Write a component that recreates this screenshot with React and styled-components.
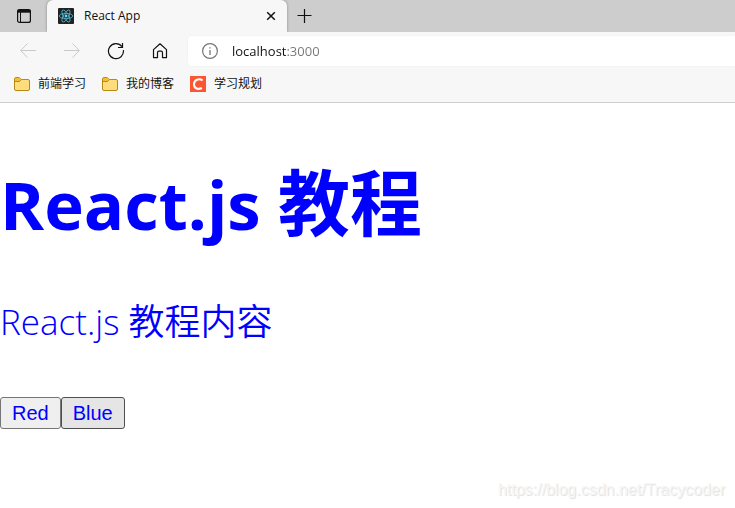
import React, { useState } from 'react';
import styled, { createGlobalStyle } from 'styled-components';


const uiFont = `"Open Sans", "Noto Sans CJK SC", sans-serif`;

let GlobalStyle = createGlobalStyle`
	* {
		box-sizing: border-box;
	}
	body {
		margin: 0;
		background: #ffffff;
		font-family: ${uiFont};
	}
	button, input {
		font-family: inherit;
	}
`;
let Browser = styled.div`
	display: flex;
	flex-direction: column;
	min-height: 100vh;
`;
let TabStrip = styled.div`
	height: 32px;
	display: flex;
	background: #cdcdcd;
`;
let IconButton = styled.button`
	width: ${props => props.$width || 44}px;
	height: 32px;
	padding: 0;
	display: flex;
	flex-shrink: 0;
	align-items: center;
	justify-content: center;
	border: 0;
	background: transparent;
	color: ${props => props.disabled ? '#c9c9c9' : '#111111'};
`;
let Tab = styled.div`
	width: 240px;
	height: 32px;
	padding: 0 0 0 11px;
	display: flex;
	align-items: center;
	gap: 10px;
	border-radius: 6px 6px 0 0;
	background: #f7f7f7;
	box-shadow: 0 0 3px rgba(0,0,0,.35);
	clip-path: inset(0 -4px);
`;
let TabTitle = styled.span`
	flex: 1;
	font-size: 12px;
	line-height: 16px;
	color: #111111;
`;
let Toolbar = styled.div`
	height: 38px;
	padding: 0 0 0 6px;
	display: flex;
	align-items: center;
	background: #f7f7f7;
`;
let AddressBar = styled.label`
	height: 30px;
	margin: 0 0 0 6px;
	padding: 0 0 0 14px;
	display: flex;
	flex: 1;
	align-items: center;
	gap: 14px;
	border-radius: 4px 0 0 4px;
	background: #ffffff;
	box-shadow: 0 0 2px rgba(0,0,0,.06);
`;
// the host is dark and the port is grey
let AddressInput = styled.input`
	min-width: 0;
	padding: 0;
	flex: 1;
	border: 0;
	outline: none;
	background: linear-gradient(to right, #111111 54px, #767676 54px);
	background-clip: text;
	-webkit-background-clip: text;
	color: transparent;
	caret-color: #111111;
	font-size: 13px;
	line-height: 20px;
`;
let Bookmarks = styled.nav`
	height: 33px;
	padding: 0 14px 5px;
	display: flex;
	align-items: center;
	gap: 16px;
	border-bottom: 1px solid #cfcfcf;
	background: #f7f7f7;
`;
let Bookmark = styled.a`
	display: flex;
	align-items: center;
	gap: 8px;
	font-size: 12px;
	line-height: 16px;
	color: #111111;
	text-decoration: none;
`;
let Page = styled.main`
	padding: 51px 0 0;
	display: flex;
	flex: 1;
	flex-direction: column;
	color: ${props => props.$color};
`;
let Title = styled.h1`
	margin: 0 0 46px;
	font-size: 72px;
	font-weight: 700;
	line-height: 96px;
`;
let Content = styled.p`
	margin: 0 0 51px;
	font-size: 36px;
	font-weight: 350;
	line-height: 48px;
`;
let Latin = styled.span`
	font-size: ${props => props.$size}px;
`;
let Switches = styled.div`
	display: flex;
`;
let SwitchButton = styled.button`
	height: 32px;
	padding: 0 11px;
	border: 1px solid ${props => props.$active ? '#4f4f4f' : '#767676'};
	border-radius: 3px;
	background: ${props => props.$active ? '#e5e5e5' : '#efefef'};
	color: inherit;
	font-family: "Liberation Sans", Arial, sans-serif;
	font-size: 20px;
	line-height: 28px;
`;
let Watermark = styled.footer`
	margin: auto 10px 8px auto;
	font-family: "Liberation Sans", Arial, sans-serif;
	font-size: 16px;
	line-height: 20px;
	color: #f6f6f6;
	text-shadow: 1px 1px 1px #dedede;
`;


const Stroke = ({ size = 16, width = 1, children }) => (
	<svg width={size} height={size} viewBox={`0 0 ${size} ${size}`} fill="none" stroke="currentColor" strokeWidth={width} aria-hidden="true">
		{children}
	</svg>
);

const TabActionsIcon = () => (
	<Stroke>
		<rect x="1.6" y="1.6" width="12.8" height="12.8" rx="2" strokeWidth="1.2"/>
		<path d="M1.5 3.2H14.5" strokeWidth="3"/>
		<path d="M4.5 4V14"/>
	</Stroke>
);

const ReactIcon = () => (
	<svg width="16" height="16" viewBox="0 0 16 16" aria-hidden="true">
		<rect width="16" height="16" rx="1" fill="#222222"/>
		<g fill="none" stroke="#53b9d3" strokeWidth="0.8">
			<ellipse cx="8" cy="8" rx="6.8" ry="2.6"/>
			<ellipse cx="8" cy="8" rx="6.8" ry="2.6" transform="rotate(60 8 8)"/>
			<ellipse cx="8" cy="8" rx="6.8" ry="2.6" transform="rotate(120 8 8)"/>
		</g>
		<circle cx="8" cy="8" r="1.4" fill="#61dafb"/>
	</svg>
);

const FolderIcon = () => (
	<svg width="16" height="16" viewBox="0 0 16 16" aria-hidden="true">
		<path d="M.5 3Q.5 1.5 2 1.5H5.3L7.3 3.5H14Q15.5 3.5 15.5 5V13Q15.5 14.5 14 14.5H2Q.5 14.5 .5 13Z" fill="#ffdc7c" stroke="#b88a12"/>
		<path d="M1 5.5H5.5L7.3 3.5L5.3 2H2Q1 2 1 3Z" fill="#f3bd3c"/>
		<path d="M.5 5.5H5.5L7.3 3.5" fill="none" stroke="#b88a12"/>
	</svg>
);

const CsdnIcon = () => (
	<svg width="16" height="16" viewBox="0 0 16 16" aria-hidden="true">
		<rect width="16" height="16" fill="#fc5531"/>
		<path d="M12.6 4.3C9 2.2 4.2 3.5 4 8.2C3.9 12.8 8.3 13.8 11.9 12" fill="none" stroke="#ffffff" strokeWidth="2"/>
	</svg>
);

const bookmarks = [
	{ name: '前端学习', Icon: FolderIcon },
	{ name: '我的博客', Icon: FolderIcon },
	{ name: '学习规划', Icon: CsdnIcon }
];

const themes = [
	{ name: 'Red', color: '#ff0000' },
	{ name: 'Blue', color: '#0000ff' }
];


export default function App() {
	const [active, setActive] = useState('Blue');
	const theme = themes.find(({ name }) => name === active);

	return (
		<Browser>
			<GlobalStyle/>
			<TabStrip>
				<IconButton $width={47} aria-label="Tab actions">
					<TabActionsIcon/>
				</IconButton>
				<Tab>
					<ReactIcon/>
					<TabTitle>React App</TabTitle>
					<IconButton $width={33} aria-label="Close tab">
						<Stroke size={10} width={1.5}><path d="M1.2 1.2L8.8 8.8M8.8 1.2L1.2 8.8"/></Stroke>
					</IconButton>
				</Tab>
				<IconButton $width={35} aria-label="New tab">
					<Stroke width={1.2}><path d="M7.5 1V15M.5 7.5H14.5"/></Stroke>
				</IconButton>
			</TabStrip>

			<Toolbar>
				<IconButton disabled aria-label="Back">
					<Stroke><path d="M16 7.5H1M7.5 .5L.7 7.5L7.5 14.5"/></Stroke>
				</IconButton>
				<IconButton disabled aria-label="Forward">
					<Stroke><path d="M0 7.5H15M8.5 .5L15.3 7.5L8.5 14.5"/></Stroke>
				</IconButton>
				<IconButton aria-label="Refresh">
					<Stroke size={18} width={1.2}>
						<path d="M16.4 8.2A7.5 7.5 0 1 1 14.9 4.6M15.5 1V5.5H11"/>
					</Stroke>
				</IconButton>
				<IconButton aria-label="Home">
					<Stroke width={1.2}>
						<path d="M1.5 6.6L8 .8L14.5 6.6V14.6H10.5V9.8Q10.5 8.2 9 8.2H7Q5.5 8.2 5.5 9.8V14.6H1.5Z" strokeLinejoin="round"/>
					</Stroke>
				</IconButton>
				<AddressBar>
					<Stroke>
						<g stroke="#767676">
							<circle cx="8" cy="8" r="7.4" strokeWidth="1.2"/>
							<path d="M8 7V12M8 4.2V5.6" strokeWidth="1.3"/>
						</g>
					</Stroke>
					<AddressInput aria-label="Address" defaultValue="localhost:3000" spellCheck={false}/>
				</AddressBar>
			</Toolbar>

			<Bookmarks aria-label="Bookmarks">
				{bookmarks.map(({ name, Icon }) => (
					<Bookmark key={name} href="#">
						<Icon/>
						{name}
					</Bookmark>
				))}
			</Bookmarks>

			<Page $color={theme.color}>
				<Title><Latin $size={67}>React.js </Latin>教程</Title>
				<Content><Latin $size={35}>React.js </Latin>教程内容</Content>
				<Switches>
					{themes.map(({ name }) => (
						<SwitchButton key={name} $active={name === active} onClick={() => setActive(name)}>
							{name}
						</SwitchButton>
					))}
				</Switches>
				<Watermark>https://blog.csdn.net/Tracycoder</Watermark>
			</Page>
		</Browser>
	);
}
